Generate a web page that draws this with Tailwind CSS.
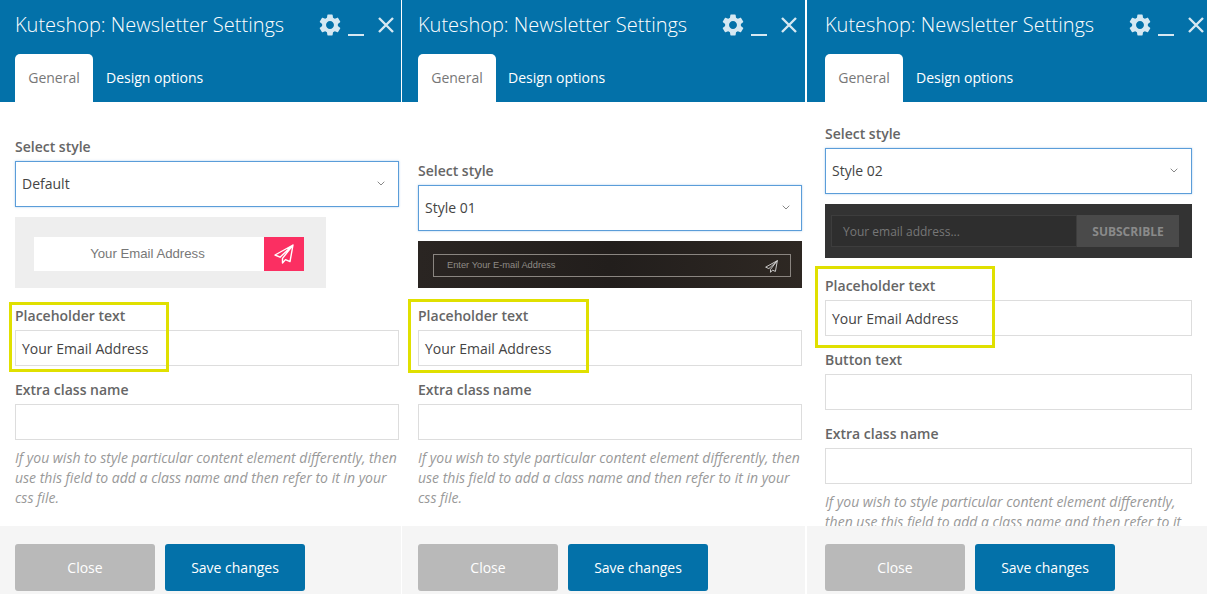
<!DOCTYPE html>
<html lang="en">
<head>
  <meta charset="UTF-8" />
  <title>Kuteshop: Newsletter Settings</title>
  <script src="https://cdn.jsdelivr.net/npm/@tailwindcss/browser@4"></script>
</head>
<body class="bg-white font-['Open_Sans',sans-serif] text-[14px] text-[#666] overflow-hidden">

  <!-- Shared icons -->
  <svg class="hidden">
    <symbol id="gear" viewBox="2.4 2 19.2 20"><path fill="currentColor" d="M19.14 12.94c.04-.3.06-.61.06-.94 0-.32-.02-.64-.07-.94l2.03-1.58a.49.49 0 0 0 .12-.61l-1.92-3.32a.488.488 0 0 0-.59-.22l-2.39.96c-.5-.38-1.03-.7-1.62-.94l-.36-2.54a.484.484 0 0 0-.48-.41h-3.84c-.24 0-.43.17-.47.41l-.36 2.54c-.59.24-1.13.57-1.62.94l-2.39-.96c-.22-.08-.47 0-.59.22L2.74 8.87c-.12.21-.08.47.12.61l2.03 1.58c-.05.3-.09.63-.09.94s.02.64.07.94l-2.03 1.58a.49.49 0 0 0-.12.61l1.92 3.32c.12.22.37.29.59.22l2.39-.96c.5.38 1.03.7 1.62.94l.36 2.54c.05.24.24.41.48.41h3.84c.24 0 .44-.17.47-.41l.36-2.54c.59-.24 1.13-.56 1.62-.94l2.39.96c.22.08.47 0 .59-.22l1.92-3.32c.12-.22.07-.47-.12-.61l-2.01-1.58zM12 15.6c-1.98 0-3.6-1.62-3.6-3.6s1.62-3.6 3.6-3.6 3.6 1.62 3.6 3.6-1.62 3.6-3.6 3.6z"/></symbol>
    <symbol id="close" viewBox="0 0 16 16"><path d="M1 1l14 14M15 1L1 15" stroke="currentColor" stroke-width="2.4" fill="none"/></symbol>
    <symbol id="chevron" viewBox="0 0 8 5"><path d="M.7.7L4 4l3.3-3.3" stroke="currentColor" stroke-width="1" fill="none"/></symbol>
    <symbol id="plane" viewBox="0 0 20 20"><path d="M19 1L1 11l5 2.2L19 1 8.5 14.4V19l3-3.4 4.5 2z" stroke="currentColor" stroke-width="1.4" stroke-linejoin="round" fill="none"/></symbol>
  </svg>

  <div class="flex h-[594px] w-[1207px] gap-px">

    <!-- Panel 1: Default -->
    <section class="relative flex h-full w-[401px] flex-none flex-col overflow-hidden">
      <header class="h-[102px] flex-none bg-[#0371a9] pl-[15px] text-white">
        <div class="flex h-[54px] items-center pb-[4px]">
          <h1 class="w-[304px] flex-none text-[20px] font-light leading-none">Kuteshop: Newsletter Settings</h1>
          <svg class="h-[22px] w-[22px] flex-none text-[#d6e8f2]"><use href="#gear"/></svg>
          <span class="ml-[7px] mt-[20px] h-[2px] w-[16px] flex-none bg-[#d6e8f2]"></span>
          <svg class="ml-[14px] h-[16px] w-[16px] flex-none text-[#d6e8f2]"><use href="#close"/></svg>
        </div>
        <nav class="flex h-[48px]">
          <a class="flex w-[78px] items-center justify-center rounded-t-[5px] bg-white pb-[1px] text-[#777]">General</a>
          <a class="flex items-center pb-[1px] pl-[13px] font-medium">Design options</a>
        </nav>
      </header>
      <div class="min-h-0 flex-1 overflow-hidden pl-[15px] pr-[2px] pt-[35px]">
        <label class="mb-[4px] block h-[20px] font-semibold leading-[20px]">Select style</label>
        <div class="flex h-[46px] items-center justify-between border border-[#5b9dd9] pb-[1px] pl-[6px] pr-[13px] text-[#444] shadow-[0_0_2px_#5b9dd980]">Default<svg class="h-[5px] w-[8px] text-[#888]"><use href="#chevron"/></svg></div>
        <div class="mt-[10px] flex h-[71px] w-[311px] items-start bg-[#eeeeee] pl-[19px] pt-[20px]">
          <div class="flex h-[34px] w-[230px] items-center justify-center bg-white pr-[3px] font-['Liberation_Sans',sans-serif] text-[13.2px] text-[#777]">Your Email Address</div>
          <div class="flex h-[34px] w-[40px] items-center justify-center bg-[#fb2f62] text-white"><svg class="h-[20px] w-[20px]"><use href="#plane"/></svg></div>
        </div>
        <label class="mb-[4px] mt-[18px] block h-[20px] font-semibold leading-[20px]">Placeholder text</label>
        <div class="flex h-[36px] items-center border border-[#ddd] pl-[6px] text-[#444]">Your Email Address</div>
        <label class="mb-[4px] mt-[14px] block h-[20px] font-semibold leading-[20px]">Extra class name</label>
        <div class="h-[36px] border border-[#ddd]"></div>
        <p class="mt-[8px] italic leading-[20px] text-[#999]">If you wish to style particular content element differently, then use this field to add a class name and then refer to it in your css file.</p>
      </div>
      <footer class="flex h-[68px] flex-none gap-[10px] bg-[#f5f5f5] pl-[15px] pt-[18px]">
        <button class="h-[47px] w-[140px] rounded-[3px] bg-[#b9b9b9] text-white">Close</button>
        <button class="h-[47px] w-[140px] rounded-[3px] bg-[#0371a9] font-medium text-white">Save changes</button>
      </footer>
      <div class="absolute left-[9px] top-[302px] h-[70px] w-[160px] border-[3px] border-[#e0e000]"></div>
    </section>

    <!-- Panel 2: Style 01 -->
    <section class="relative flex h-full w-[403px] flex-none flex-col overflow-hidden">
      <header class="h-[102px] flex-none bg-[#0371a9] pl-[16px] text-white">
        <div class="flex h-[54px] items-center pb-[4px]">
          <h1 class="w-[304px] flex-none text-[20px] font-light leading-none">Kuteshop: Newsletter Settings</h1>
          <svg class="h-[22px] w-[22px] flex-none text-[#d6e8f2]"><use href="#gear"/></svg>
          <span class="ml-[7px] mt-[20px] h-[2px] w-[16px] flex-none bg-[#d6e8f2]"></span>
          <svg class="ml-[14px] h-[16px] w-[16px] flex-none text-[#d6e8f2]"><use href="#close"/></svg>
        </div>
        <nav class="flex h-[48px]">
          <a class="flex w-[78px] items-center justify-center rounded-t-[5px] bg-white pb-[1px] text-[#777]">General</a>
          <a class="flex items-center pb-[1px] pl-[12px] font-medium">Design options</a>
        </nav>
      </header>
      <div class="min-h-0 flex-1 overflow-hidden pl-[16px] pr-[3px] pt-[59px]">
        <label class="mb-[4px] block h-[20px] font-semibold leading-[20px]">Select style</label>
        <div class="flex h-[46px] items-center justify-between border border-[#5b9dd9] pb-[1px] pl-[6px] pr-[11px] text-[#444] shadow-[0_0_2px_#5b9dd980]">Style 01<svg class="h-[5px] w-[8px] text-[#888]"><use href="#chevron"/></svg></div>
        <div class="mt-[10px] flex h-[47px] items-start bg-gradient-to-r from-[#2a2522] via-[#221e1c] to-[#2e2823] pl-[15px] pt-[13px]">
          <div class="flex h-[23px] w-[358px] items-center justify-between border border-[#8a8580] pl-[13px] pr-[12px] pt-[1px] font-['Liberation_Sans',sans-serif] text-[9.3px] text-[#8f8b86]">Enter Your E-mail Address<svg class="h-[13px] w-[13px] text-[#d8d8d8]"><use href="#plane"/></svg></div>
        </div>
        <label class="mb-[4px] mt-[18px] block h-[20px] font-semibold leading-[20px]">Placeholder text</label>
        <div class="flex h-[36px] items-center border border-[#ddd] pl-[6px] text-[#444]">Your Email Address</div>
        <label class="mb-[4px] mt-[14px] block h-[20px] font-semibold leading-[20px]">Extra class name</label>
        <div class="h-[36px] border border-[#ddd]"></div>
        <p class="mt-[8px] italic leading-[20px] text-[#999]">If you wish to style particular content element differently, then use this field to add a class name and then refer to it in your css file.</p>
      </div>
      <footer class="flex h-[68px] flex-none gap-[10px] bg-[#f5f5f5] pl-[16px] pt-[18px]">
        <button class="h-[47px] w-[140px] rounded-[3px] bg-[#b9b9b9] text-white">Close</button>
        <button class="h-[47px] w-[140px] rounded-[3px] bg-[#0371a9] font-medium text-white">Save changes</button>
      </footer>
      <div class="absolute left-[6px] top-[299px] h-[74px] w-[181px] border-[3px] border-[#e0e000]"></div>
    </section>

    <!-- Panel 3: Style 02 -->
    <section class="relative ml-px flex h-full w-[400px] flex-none flex-col overflow-hidden">
      <header class="h-[102px] flex-none bg-[#0371a9] pl-[18px] text-white">
        <div class="flex h-[54px] items-center pb-[4px]">
          <h1 class="w-[304px] flex-none text-[20px] font-light leading-none">Kuteshop: Newsletter Settings</h1>
          <svg class="h-[22px] w-[22px] flex-none text-[#d6e8f2]"><use href="#gear"/></svg>
          <span class="ml-[7px] mt-[20px] h-[2px] w-[16px] flex-none bg-[#d6e8f2]"></span>
          <svg class="ml-[14px] h-[16px] w-[16px] flex-none text-[#d6e8f2]"><use href="#close"/></svg>
        </div>
        <nav class="flex h-[48px]">
          <a class="flex w-[78px] items-center justify-center rounded-t-[5px] bg-white pb-[1px] text-[#777]">General</a>
          <a class="flex items-center pb-[1px] pl-[13px] font-medium">Design options</a>
        </nav>
      </header>
      <div class="min-h-0 flex-1 overflow-hidden pl-[18px] pr-[15px] pt-[22px]">
        <label class="mb-[4px] block h-[20px] font-semibold leading-[20px]">Select style</label>
        <div class="flex h-[46px] items-center justify-between border border-[#5b9dd9] pb-[1px] pl-[6px] pr-[13px] text-[#444] shadow-[0_0_2px_#5b9dd980]">Style 02<svg class="h-[5px] w-[8px] text-[#888]"><use href="#chevron"/></svg></div>
        <div class="mt-[10px] flex h-[54px] items-center bg-[#333333] pl-[6px]">
          <div class="flex h-[32px] w-[246px] items-center border border-[#3d3d3d] bg-[#2e2e2e] pl-[11px] pt-[1px] text-[12px] text-[#777]">Your email address...</div>
          <div class="flex h-[32px] w-[102px] items-center justify-center bg-[#4a4a4a] pt-[1px] text-[12px] font-bold text-[#8a8a8a]">SUBSCRIBLE</div>
        </div>
        <label class="mb-[4px] mt-[18px] block h-[20px] font-semibold leading-[20px]">Placeholder text</label>
        <div class="flex h-[36px] items-center border border-[#ddd] pl-[6px] text-[#444]">Your Email Address</div>
        <label class="mb-[4px] mt-[14px] block h-[20px] font-semibold leading-[20px]">Button text</label>
        <div class="h-[36px] border border-[#ddd]"></div>
        <label class="mb-[4px] mt-[14px] block h-[20px] font-semibold leading-[20px]">Extra class name</label>
        <div class="h-[36px] border border-[#ddd]"></div>
        <p class="mt-[8px] italic leading-[20px] text-[#999]">If you wish to style particular content element differently, then use this field to add a class name and then refer to it in your css file.</p>
      </div>
      <footer class="flex h-[68px] flex-none gap-[10px] bg-[#f5f5f5] pl-[18px] pt-[18px]">
        <button class="h-[47px] w-[140px] rounded-[3px] bg-[#b9b9b9] text-white">Close</button>
        <button class="h-[47px] w-[140px] rounded-[3px] bg-[#0371a9] font-medium text-white">Save changes</button>
      </footer>
      <div class="absolute left-[8px] top-[266px] h-[82px] w-[180px] border-[3px] border-[#e0e000]"></div>
    </section>

  </div>
</body>
</html>
